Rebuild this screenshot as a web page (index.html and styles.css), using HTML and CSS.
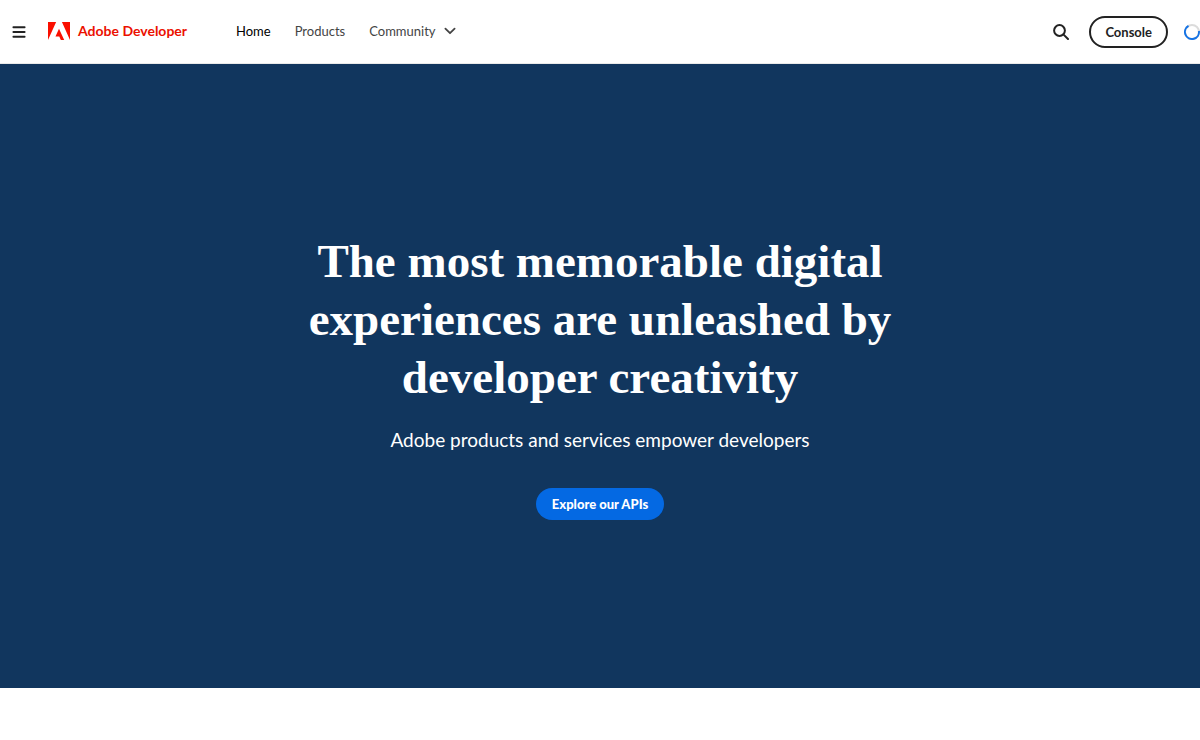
FILE: index.html
```html
<!DOCTYPE html>
<html lang="en">
<head>
<meta charset="utf-8">
<meta name="viewport" content="width=device-width, initial-scale=1">
<title>Adobe Developer</title>
<link rel="stylesheet" href="styles.css">
</head>
<body>
<header class="header">
  <button class="icon-button menu-button" type="button" aria-label="Open menu">
    <svg width="14" height="12" viewBox="0 0 14 12" fill="#222"><rect x="0.5" y="0.3" width="13" height="2" rx="0.8"/><rect x="0.5" y="5" width="13" height="2" rx="0.8"/><rect x="0.5" y="9.7" width="13" height="2" rx="0.8"/></svg>
  </button>
  <a class="brand" href="#">
    <svg width="22" height="18" viewBox="0 0 30 26" preserveAspectRatio="none" fill="#fa0f00" aria-hidden="true"><path d="M19 0H30V26ZM11.1 0H0V26ZM15 9.6L22.1 26H17.5L15.4 20.8H10.2Z"/></svg>
    <span class="brand-name">Adobe Developer</span>
  </a>
  <nav class="nav" aria-label="Main">
    <a class="nav-link nav-link-current" href="#" aria-current="page">Home</a>
    <a class="nav-link" href="#">Products</a>
    <button class="nav-link nav-menu" type="button">Community
      <svg width="12" height="8" viewBox="0 0 12 8" fill="none" stroke="#444" stroke-width="1.8" stroke-linecap="round" stroke-linejoin="round"><path d="M1.4 1.6L6 6.2L10.6 1.6"/></svg>
    </button>
  </nav>
  <div class="actions">
    <button class="icon-button" type="button" aria-label="Search">
      <svg width="16" height="16" viewBox="0 0 16 16" fill="none" stroke="#222" stroke-width="2" stroke-linecap="round"><circle cx="6.5" cy="6.5" r="5.4"/><path d="M10.6 10.6L15 15"/></svg>
    </button>
    <a class="console-button" href="#">Console</a>
    <svg class="spinner" width="16" height="16" viewBox="0 0 16 16" fill="none" stroke-width="2" role="img" aria-label="Loading"><circle cx="8" cy="8" r="7" stroke="#dcdcdc"/><path d="M14.9 7A7 7 0 1 1 4.5 1.9" stroke="#1473e6"/></svg>
  </div>
</header>
<main class="hero">
  <h1 class="hero-title">The most memorable digital experiences are unleashed by developer creativity</h1>
  <p class="hero-text">Adobe products and services empower developers</p>
  <a class="hero-button" href="#">Explore our APIs</a>
</main>
</body>
</html>
```
FILE: styles.css
```css
* { box-sizing: border-box; }

body {
  margin: 0;
  background: #fff;
  color: #222;
  font-family: Lato, "Open Sans", sans-serif;
  font-size: 13px;
  line-height: 18px;
}

a { color: inherit; text-decoration: none; }

button {
  padding: 0;
  border: 0;
  background: none;
  color: inherit;
  font: inherit;
}

svg { display: block; flex: none; }

.header {
  display: flex;
  align-items: center;
  height: 64px;
  padding-left: 12px;
  border-bottom: 1px solid #eaeaea;
}

.brand {
  display: flex;
  align-items: center;
  gap: 8px;
  width: 188px;
  margin-left: 22px;
  padding-bottom: 2px;
  color: #eb1000;
}

.brand-name {
  font-size: 14px;
  font-weight: 700;
  white-space: nowrap;
}

.nav {
  display: flex;
  align-items: center;
  gap: 24px;
  padding-bottom: 2px;
}

.nav-link { color: #444; }

.nav-link-current { color: #000; }

.nav-menu {
  display: flex;
  align-items: center;
  gap: 8px;
}

.actions {
  display: flex;
  align-items: center;
  margin-left: auto;
}

.console-button {
  padding: 5px 14px;
  margin: 0 16px 0 20px;
  border: 2px solid #222;
  border-radius: 16px;
  font-weight: 700;
}

.hero {
  display: flex;
  flex-direction: column;
  align-items: center;
  justify-content: center;
  min-height: 624px;
  padding: 32px 24px;
  background: #11365e;
  color: #fff;
  text-align: center;
}

.hero-title {
  max-width: 600px;
  margin: 0;
  font-family: "Liberation Serif", serif;
  font-size: 47px;
  font-weight: 700;
  line-height: 58px;
}

.hero-text {
  margin: 18px 0 32px;
  font-size: 19px;
  line-height: 32px;
}

.hero-button {
  padding: 7px 16px;
  border-radius: 16px;
  background: #0469e3;
  font-weight: 900;
}
```
